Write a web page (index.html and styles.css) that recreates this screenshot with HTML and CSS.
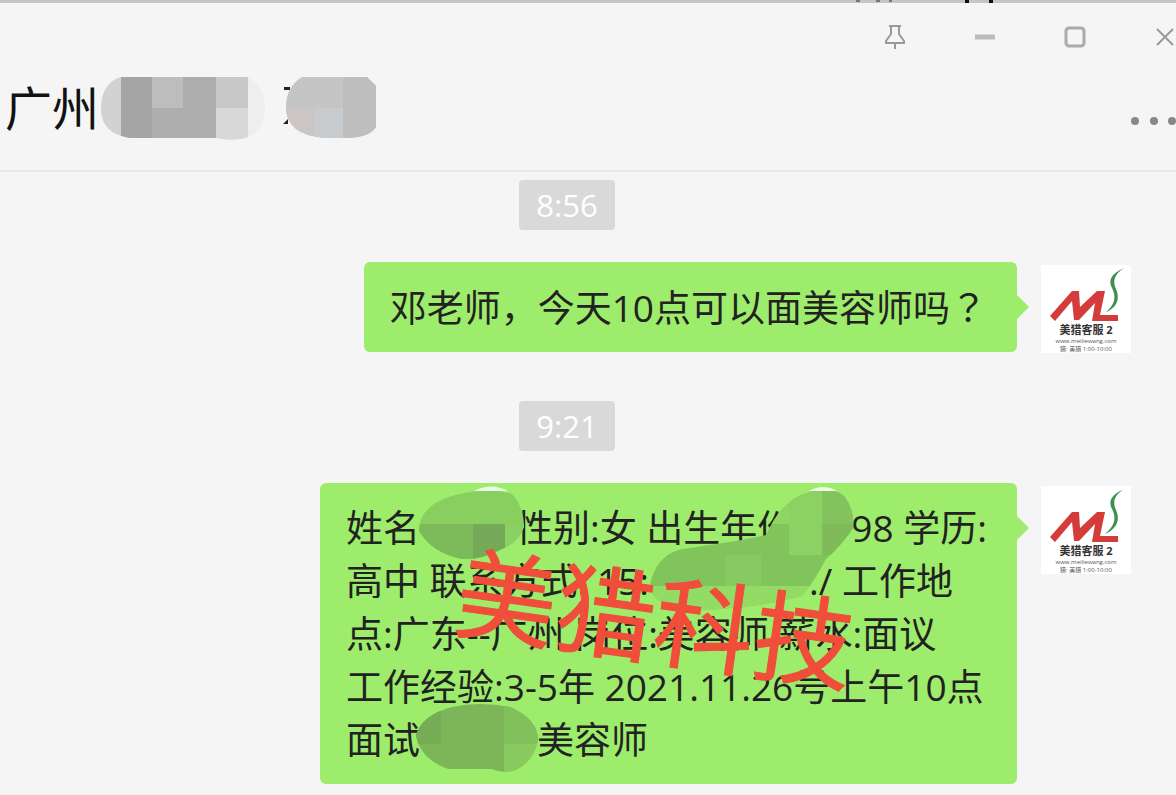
FILE: index.html
```html
<!DOCTYPE html>
<html lang="zh-CN">
<head>
    <meta charset="UTF-8">
    <meta name="viewport" content="width=device-width, initial-scale=1.0">
    <title>广州</title>
    <link rel="stylesheet" href="styles.css">
</head>
<body>

<!-- logo used by both avatars -->
<svg class="defs" aria-hidden="true">
    <symbol id="logo" viewBox="0 0 90 88">
        <path d="M9 51 L31 26 H38 L39 42 L56 26 H64 L59 50 H77 V56 H51 L54 38 L38 55 H33 L31 36 L14 56 Z" fill="#d43c3c"/>
        <path d="M83 3 C70 9 67 15 71 23 C75 31 75 39 64 48 C77 42 79 33 75 24 C71 15 74 9 83 3 Z" fill="#3f8f50"/>
        <text x="45" y="69" class="logo-name">美猎客服 2</text>
        <text x="45" y="78" class="logo-small">www.meiliewang.com</text>
        <text x="45" y="86" class="logo-small">猎: 美猎 1:00-10:00</text>
    </symbol>
</svg>

<header class="header">
    <div class="edge">
        <svg width="48" height="3" viewBox="0 0 48 3" aria-hidden="true">
            <path d="M0 0h4v2h-4zM20 0h4v2h-4zM33 0h3v2h-3z" fill="#777"/>
        </svg>
        <svg width="36" height="3" viewBox="0 0 36 3" aria-hidden="true">
            <path d="M1 0h4v3h-4zM25 0h4v3h-4z" fill="#111"/>
        </svg>
    </div>
    <div class="window-buttons">
        <button aria-label="置顶">
            <svg width="24" height="26" viewBox="0 0 24 26"><path d="M6 2H18M8 2V10L3 17V19H21V17L16 10V2M12 19V25" stroke-width="2"/></svg>
        </button>
        <button aria-label="最小化">
            <svg width="24" height="26" viewBox="0 0 24 26"><path d="M2 13H22" stroke="#bbb" stroke-width="5"/></svg>
        </button>
        <button aria-label="最大化">
            <svg width="24" height="26" viewBox="0 0 24 26"><rect x="3" y="4" width="18" height="18" rx="3" stroke="#aaa" stroke-width="3"/></svg>
        </button>
        <button aria-label="关闭">
            <svg width="24" height="26" viewBox="0 0 24 26"><path d="M4 5L20 21M20 5L4 21" stroke-width="2"/></svg>
        </button>
    </div>
    <div class="title-row">
        <h1>广州</h1>
        <svg class="title-mask" width="280" height="66" viewBox="0 0 280 66" aria-hidden="true">
            <clipPath id="m1"><path d="M22 2H148Q166 10 166 34Q164 60 142 64Q130 66 118 63H30Q2 58 2 34Q2 8 22 2Z"/></clipPath>
            <g clip-path="url(#m1)">
                <rect width="166" height="66" fill="#eee"/>
                <rect width="22" height="66" fill="#d2d2d2"/>
                <rect x="22" width="31" height="66" fill="#a5a5a5"/>
                <rect x="53" width="31" height="33" fill="#bdbdbd"/>
                <rect x="84" width="33" height="33" fill="#adadad"/>
                <rect x="53" y="33" width="64" height="33" fill="#aeaeae"/>
                <rect x="117" width="32" height="33" fill="#c8c8c8"/>
                <rect x="117" y="33" width="32" height="33" fill="#d8d8d8"/>
            </g>
            <path d="M185 12h6v3h-6zM189 44v5h-5z" fill="#222"/>
            <clipPath id="m2"><path d="M203 2H268L277 11V52Q271 62 249 63H226Q187 60 187 32Q187 12 203 2Z"/></clipPath>
            <g clip-path="url(#m2)">
                <rect x="184" width="96" height="66" fill="#c5c5c5"/>
                <rect x="244" width="36" height="66" fill="#bebebe"/>
                <rect x="184" y="33" width="32" height="33" fill="#cbc6c4"/>
                <rect x="216" y="33" width="28" height="33" fill="#c8cbcd"/>
            </g>
        </svg>
        <button class="more" aria-label="更多">
            <svg width="48" height="10" viewBox="0 0 48 10"><circle cx="5" cy="5" r="4"/><circle cx="24" cy="5" r="4"/><circle cx="42" cy="5" r="4"/></svg>
        </button>
    </div>
</header>

<main class="chat">
    <time class="time">8:56</time>
    <div class="message">
        <p class="bubble">邓老师，今天10点可以面美容师吗<span class="mark" lang="ja">？</span></p>
        <svg class="avatar" role="img" aria-label="美猎客服2"><use href="#logo"/></svg>
    </div>

    <time class="time">9:21</time>
    <div class="message">
        <div class="bubble">
            姓名<span class="gap gap-name"></span>性别:女 出生年份<span class="gap gap-year"></span>98 学历:<br>
            高中 联系方式: 15:<span class="gap gap-phone"></span>./ 工作地<br>
            点:广东--广州 岗位:美容师 薪水:面议<br>
            工作经验:3-5年 2021.11.26号上午10点<br>
            面试<span class="gap gap-shop"></span>美容师
            <svg class="mosaic" width="697" height="301" viewBox="0 0 697 301" aria-hidden="true">
                <clipPath id="m3"><path d="M140 11Q170 4 192 11Q204 24 204 44Q198 60 182 66Q162 77 142 76Q112 70 99 48Q99 20 140 11Z"/></clipPath>
                <g clip-path="url(#m3)">
                    <rect x="95" width="115" height="80" fill="#89cf60"/>
                    <rect x="95" y="41" width="58" height="40" fill="#7dba59"/>
                    <rect x="153" y="41" width="32" height="40" fill="#75ab58"/>
                    <rect x="185" y="41" width="25" height="40" fill="#8bd062"/>
                </g>
                <clipPath id="m4"><path d="M490 9Q512 3 524 13Q535 27 533 45Q522 62 506 76Q494 99 482 113Q440 124 400 126Q332 130 330 102Q336 72 362 66Q420 58 446 52Q462 16 490 9Z"/></clipPath>
                <g clip-path="url(#m4)">
                    <rect x="320" width="220" height="130" fill="#81c45b"/>
                    <rect x="320" y="103" width="170" height="30" fill="#92dc65"/>
                    <rect x="406" y="72" width="35" height="31" fill="#87ca61"/>
                    <rect x="440" width="30" height="41" fill="#8ed563"/>
                    <rect x="469" width="33" height="72" fill="#8bd163"/>
                    <rect x="502" width="38" height="41" fill="#83c35e"/>
                    <rect x="502" y="41" width="38" height="31" fill="#7fba5b"/>
                </g>
                <clipPath id="m5"><path d="M132 224Q160 218 190 224Q218 236 218 257Q214 278 196 287Q182 291 172 286H128Q100 276 96 252Q102 232 132 224Z"/></clipPath>
                <g clip-path="url(#m5)">
                    <rect x="95" y="220" width="125" height="75" fill="#7cb659"/>
                    <rect x="95" y="220" width="26" height="41" fill="#76ac55"/>
                    <rect x="184" y="220" width="36" height="41" fill="#82c05c"/>
                    <rect x="184" y="261" width="36" height="34" fill="#89cb61"/>
                </g>
                <path d="M154 8Q171 -1 188 8Z" fill="#eefbe6"/>
                <path d="M489 8Q503 0 517 8Z" fill="#eefbe6"/>
            </svg>
            <span class="watermark">美猎科技</span>
        </div>
        <svg class="avatar" role="img" aria-label="美猎客服2"><use href="#logo"/></svg>
    </div>
</main>

</body>
</html>
```
FILE: styles.css
```css
* {
    box-sizing: border-box;
}

body {
    margin: 0;
    background: #f5f5f5;
    color: #222;
    font-family: "Open Sans", "Noto Sans CJK SC", sans-serif;
    overflow: hidden;
}

button {
    border: 0;
    padding: 0;
    background: none;
    cursor: pointer;
}

.defs {
    position: absolute;
    width: 0;
    height: 0;
}

/* header */
.header {
    border-bottom: 2px solid #e6e7e6;
}

.edge {
    display: flex;
    justify-content: flex-end;
    gap: 60px;
    height: 3px;
    padding-right: 176px;
    background: #c6c6c6;
}

.window-buttons {
    display: flex;
    justify-content: flex-end;
    height: 70px;
    margin-right: -34px;
}

.window-buttons button {
    width: 90px;
}

.window-buttons svg {
    fill: none;
    stroke: #999;
}

.title-row {
    display: flex;
    align-items: center;
    height: 70px;
    margin-bottom: 27px;
    padding-left: 5px;
}

.title-row h1 {
    margin: 0;
    color: #111;
    font-size: 47px;
    font-weight: 400;
    line-height: 70px;
}

.title-mask {
    flex: none;
}

.more {
    height: 10px;
    margin: 26px -2px 0 auto;
    line-height: 0;
    fill: #888;
}

/* messages */
.chat {
    display: flex;
    flex-direction: column;
    padding: 8px 45px 12px 3px;
}

.time {
    align-self: center;
    padding: 0 17px;
    border-radius: 4px;
    background: #d9d9d9;
    color: #fff;
    font-size: 31px;
    line-height: 50px;
}

.message {
    display: flex;
    justify-content: flex-end;
    align-items: flex-start;
    gap: 24px;
    margin: 32px 0 48px;
}

.message:last-child {
    margin-bottom: 0;
}

.bubble {
    position: relative;
    margin: 0;
    padding: 18px 30px 18px 26px;
    border-radius: 6px;
    background: #9eec6b;
    font-size: 37px;
    line-height: 53px;
}

.bubble::after {
    content: "";
    position: absolute;
    top: 33px;
    left: 100%;
    border: 12px solid transparent;
    border-left-color: #9eec6b;
    border-right: 0;
}

/* full-width question mark sits in the middle of its cell */
.mark {
    font-family: "Noto Sans CJK JP", sans-serif;
}

.avatar {
    flex: none;
    width: 90px;
    height: 88px;
    margin-top: 3px;
    background: #fff;
}

.logo-name {
    fill: #333;
    font-size: 11px;
    font-weight: 700;
    text-anchor: middle;
}

.logo-small {
    fill: #555;
    font-size: 6px;
    text-anchor: middle;
}

/* space under the blurred parts */
.gap {
    display: inline-block;
}

.gap-name {
    width: 96px;
}

.gap-year {
    width: 57px;
}

.gap-phone {
    width: 160px;
}

.gap-shop {
    width: 117px;
}

.mosaic {
    position: absolute;
    top: 0;
    right: 0;
}

.watermark {
    position: absolute;
    top: 81px;
    right: 161px;
    color: #f04d3a;
    font-family: "Noto Sans CJK SC", sans-serif;
    font-size: 100px;
    line-height: 100px;
    white-space: nowrap;
    -webkit-text-stroke: 1px #f04d3a;
    transform: rotate(8deg);
}
```
